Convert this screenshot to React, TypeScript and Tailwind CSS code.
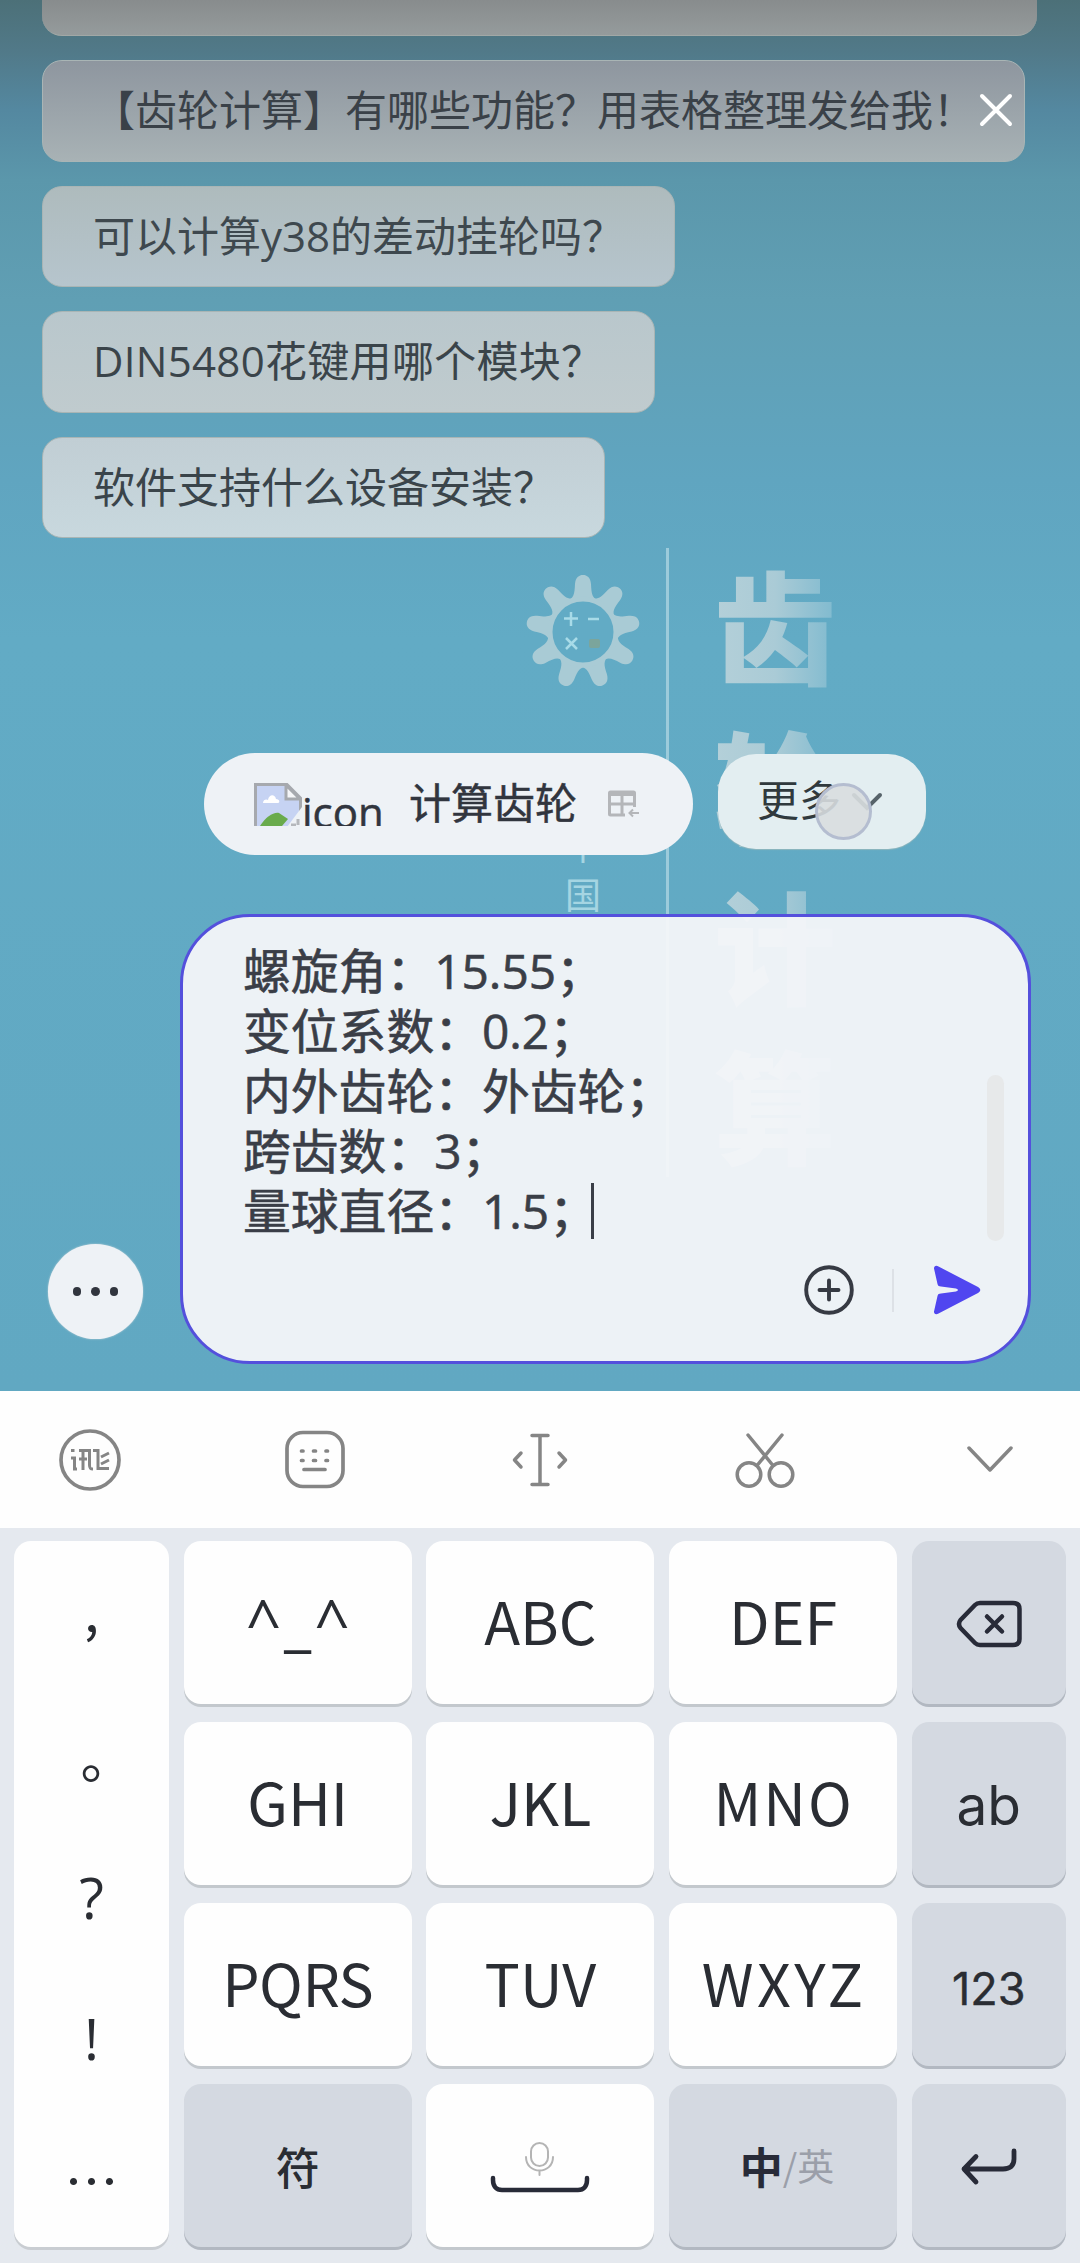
import type { ReactNode } from "react";
import clsx from "clsx";

const latinCjk = "font-['Open_Sans','Noto_Sans_CJK_SC',sans-serif]";
const cjk = "font-['Noto_Sans_CJK_SC',sans-serif]";

const suggestions = [
  {
    text: "【齿轮计算】有哪些功能？用表格整理发给我！",
    box: "w-[983px] bg-linear-to-b from-[#8e969f] to-[#a8b2b5] text-[#3a4148]",
  },
  { text: "可以计算y38的差动挂轮吗？", box: "w-[633px] bg-linear-to-b from-[#aebbbd] to-[#b6c5cd] text-[#3e484e]" },
  {
    text: "DIN5480花键用哪个模块？",
    box: "w-[613px] bg-linear-to-b from-[#b9c7cc] to-[#c0cbce] text-[#3a444a] tracking-[0.3px]",
  },
  { text: "软件支持什么设备安装？", box: "w-[563px] bg-linear-to-b from-[#c1ced4] to-[#c8d8de] text-[#3a444a]" },
];

const message = ["螺旋角：15.55；", "变位系数：0.2；", "内外齿轮：外齿轮；", "跨齿数：3；", "量球直径：1.5；"];

const GearLogo = () => (
  <svg viewBox="-60 -60 120 120" className="absolute left-[523px] top-[572px] size-[120px]">
    <g fill="#a9cbd5">
      {[0, 40, 80, 120, 160, 200, 240, 280, 320].map((a) => (
        <path
          key={a}
          transform={`rotate(${a})`}
          d="M-16 -31C-9 -34 -8.500 -38 -8 -48C-7.500 -54.500 -4 -57 0 -57S7.500 -54.500 8 -48C8.500 -38 9 -34 16 -31Z"
        />
      ))}
    </g>
    <circle r="33" fill="#62abc5" stroke="#a9cbd5" strokeWidth="5" />
    <g stroke="#a8dbe8" strokeWidth="2.500" fill="none">
      <path d="M-19 -13.500H-5M-12 -20V-6M5 -13H16M-17 6L-6 17M-6 6L-17 17" />
    </g>
    <rect x="6" y="7" width="11" height="9" rx="2" fill="#7ba59c" />
  </svg>
);

// Faded artwork behind the chat
const Backdrop = () => (
  <div className={clsx("absolute inset-0", cjk)}>
    <GearLogo />
    <div className="absolute left-[666px] top-[548px] h-[629px] w-[3px] bg-[#9ccbdb]" />
    <div className="absolute left-[714px] top-[542px] w-[122px] bg-linear-to-r from-[#b4d0d9] via-[#aacbd6] to-[#7fbacf] bg-clip-text text-center text-[122px] leading-[160px] font-black text-transparent">
      {["齿", "轮", "计", "算"].map((c) => (
        <div key={c}>{c}</div>
      ))}
    </div>
    <div className="absolute left-[565px] top-[820px] w-[36px] text-center text-[36px] leading-[49px] text-[#a5d5e2]">
      <div>中</div>
      <div>国</div>
    </div>
  </div>
);

const BrokenImage = () => (
  <div className="flex h-[43px] w-[132px] overflow-hidden">
    <svg viewBox="0 0 48 48" className="size-12 shrink-0">
      <path d="M1.500 48V1.500H33L46.500 15V48" fill="#c6d3f3" stroke="#a6a9ae" strokeWidth="3" />
      <path d="M32 2V16H46Z" fill="#f5f6f8" stroke="#a6a9ae" strokeWidth="3" />
      <path d="M9 20C9 16 13 16 14 17C15 11 21 11 22 16C26 16 26 20 24 20Z" fill="#fff" />
      <path d="M6 43C12 34 19 29 25 30L34 36L28 43Z" fill="#69ab4c" />
      <path d="M30 48L48 24V48Z" fill="#eef2f6" />
      <path d="M37 42H42M44 36V42" stroke="#b5b8bc" strokeWidth="3" />
    </svg>
    <span className="text-[42px] leading-[58px] text-[#31353e] [-webkit-text-stroke:0.5px_#31353e]">icon</span>
  </div>
);

const TableIcon = () => (
  <svg viewBox="0 0 32 28" className="h-7 w-8" fill="none" stroke="#b4b6b9" strokeWidth="3">
    <rect x="1.500" y="2" width="25" height="23" rx="1" />
    <path d="M2 4H26" strokeWidth="4" />
    <path d="M2 14H26M14 4V25" />
    <path d="M17 17H32V28H17Z" fill="#eef2f6" stroke="none" />
    <path d="M22 23H31M25 19.500L21.500 23L25 26.500" strokeWidth="2" />
  </svg>
);

const QuickActions = () => (
  <div className={clsx("relative mt-[215px] ml-[204px] flex items-start gap-[25px]", latinCjk)}>
    <div className="flex h-[102px] w-[489px] items-center rounded-full bg-[#eef2f6] pl-[50px]">
      <BrokenImage />
      <span className="mt-[-2px] ml-[23px] w-[168px] text-[42px] leading-[60px] text-[#31353e] [-webkit-text-stroke:0.5px_#31353e]">
        计算齿轮
      </span>
      <span className="ml-[31px]">
        <TableIcon />
      </span>
    </div>
    <div className="relative mt-px flex h-[95px] w-[208px] items-center rounded-[38px] bg-[#e3eef1] pl-[39px] text-[#30393d] shadow-[0_1px_1px_#8fb6be]">
      <span className="mt-[-3px] text-[42px] leading-[60px]">更多</span>
      <svg viewBox="0 0 32 20" className="ml-[10px] h-5 w-8" fill="none" stroke="#57636a" strokeWidth="4" strokeLinecap="round">
        <path d="M3 3L16 16L29 3" />
      </svg>
      <div className="absolute left-[97px] top-[29px] size-[57px] rounded-full border-[3px] border-[#b4bdd0] bg-[#d8dddf]/90" />
    </div>
  </div>
);

const Composer = () => (
  <div className="relative mt-[59px] flex items-end gap-[37px] pl-12">
    <button className="mb-[25px] flex size-[95px] items-center justify-center gap-[10px] rounded-full bg-[#eef2f6] shadow-[0_0_2px_#c4d4da]">
      {[0, 1, 2].map((i) => (
        <i key={i} className="size-[8.5px] rounded-full bg-[#31353e]" />
      ))}
    </button>
    <div className="h-[450px] w-[851px] rounded-[70px] border-[3px] border-[#5450dc] bg-[#f4f6f9]/95 pt-6">
      <div className="flex h-[300px] items-end pr-6 pl-[60px]">
        <div className={clsx("flex-1 text-[47.8px] leading-[60px] text-[#3a3e47] [-webkit-text-stroke:0.6px_#3a3e47]", latinCjk)}>
          {message.map((line, i) => (
            <div key={line} className="flex h-[60px] items-center">
              {line}
              {i === message.length - 1 && <span className="ml-[-6px] h-14 w-[3px] bg-[#3a3e47]" />}
            </div>
          ))}
        </div>
        <div className="h-[166px] w-[17px] rounded-full bg-[#e7e9ea]" />
      </div>
      <div className="mt-6 flex h-[50px] items-center justify-end pr-[47px]">
        <svg viewBox="0 0 50 50" className="size-[50px]" fill="none" stroke="#363a43" strokeWidth="3.900" strokeLinecap="round">
          <circle cx="25" cy="25" r="22.800" />
          <path d="M15.500 25H34.500M25 15.500V34.500" />
        </svg>
        <div className="ml-[38px] h-[43px] w-[2px] bg-[#dde1e6]" />
        <svg viewBox="0 0 48 50" className="ml-[39px] h-[50px] w-12" fill="#5046f0">
          <path d="M1 3.500C1 .5 3.500 .2 5.500 1.500L45 22C48 24 48 26 45 28L5.500 48.500C3 50 .8 49 1 46.500L4.500 31C5 29 6 28.800 8 28.500L23 26.500Q27 25 23 23.500L8 21.500C6 21.200 5 21 4.500 19Z" />
        </svg>
      </div>
    </div>
  </div>
);

const Toolbar = () => (
  <div className="-mx-[22.5px] grid h-[137px] shrink-0 grid-cols-5 place-items-center bg-[#fefefe] text-[#858585]">
    <svg viewBox="0 0 62 62" className="size-[62px]" fill="none" stroke="currentColor" strokeWidth="3.700">
      <circle cx="31" cy="31" r="29" />
      <g strokeWidth="3">
        <path d="M12 21.500H15.500M12 29H15.500V40H18" />
        <path d="M20 21.500H30.500V36C30.500 39 31 40 34 40M24 21.500V41M20 30H28" />
        <path d="M34 21.500H39V39.500H50M42 28L50 24M42 35L50 31" />
      </g>
    </svg>
    <svg viewBox="0 0 60 60" className="size-[60px]" fill="none" stroke="currentColor" strokeWidth="3.700" strokeLinecap="round">
      <rect x="2" y="2.500" width="56" height="54" rx="16" />
      <path d="M16.500 21H18M28.500 21H30.500M41 21H42.500M16.500 30.500H18M28.500 30.500H30.500M41 30.500H42.500M19 39.500H40" />
    </svg>
    <svg viewBox="0 0 56 56" className="size-14" fill="none" stroke="currentColor" strokeWidth="3.500" strokeLinecap="round" strokeLinejoin="round">
      <path d="M20 3.500H36M28 3.500V52.500M20 52.500H36M9 21L2.500 28L9 35M47 21L53.500 28L47 35" />
    </svg>
    <svg viewBox="0 0 60 58" className="h-[58px] w-[60px]" fill="none" stroke="currentColor" strokeWidth="3.500" strokeLinecap="round">
      <path d="M13 4L38 34.500M47 4L22 34.500" />
      <circle cx="14" cy="43.500" r="11.800" />
      <circle cx="46" cy="43.500" r="11.800" />
    </svg>
    <svg viewBox="0 0 48 28" className="h-7 w-12" fill="none" stroke="currentColor" strokeWidth="3.500" strokeLinecap="round" strokeLinejoin="round">
      <path d="M3 2L24 24L45 2" />
    </svg>
  </div>
);

const Key = ({ children, dark, className }: { children: ReactNode; dark?: boolean; className?: string }) => (
  <button
    className={clsx(
      "flex items-center justify-center rounded-[17px]",
      dark ? "bg-[#d4d9e1] shadow-[0_3px_0_#b2b8c1]" : "bg-[#fefefe] shadow-[0_3px_0_#c3c8cd]",
      className ?? "pb-[6px] text-[59px]",
    )}
  >
    {children}
  </button>
);

const Keyboard = () => (
  <div
    className={clsx(
      "grid h-[735px] grid-cols-[155px_228px_228px_228px_154px] grid-rows-[repeat(4,163px)] gap-x-[14.7px] gap-y-[18px] bg-[#e5e9ef] pt-[13px] pl-[14px] leading-none text-[#2a2d33]",
      cjk,
    )}
  >
    <div className="row-span-4 flex flex-col items-center rounded-[17px] bg-[#fefefe] text-[54px] leading-[141px] shadow-[0_3px_0_#c9cdd2]">
      <span className="h-[141px] -translate-y-[3px]">,</span>
      <span className="h-[141px] translate-x-[16px] translate-y-[3px]">。</span>
      <span className="h-[141px] translate-y-1 font-['Open_Sans',sans-serif] text-[57px]">?</span>
      <span className="h-[141px] translate-y-1 font-['Open_Sans',sans-serif] text-[57px]">!</span>
      <span className="h-[141px] translate-y-[3px]">…</span>
    </div>
    <Key className="pb-1 pl-[3px] font-['Open_Sans',sans-serif] text-[62px] tracking-[3px]">^_^</Key>
    <Key>ABC</Key>
    <Key>DEF</Key>
    <Key dark className="pt-[3px]">
      <svg viewBox="0 0 66 48" className="h-12 w-[66px]" fill="none" stroke="#282b38" strokeWidth="4.500" strokeLinecap="round" strokeLinejoin="round">
        <path d="M24 3H57Q63.500 3 63.500 9V39Q63.500 45 57 45H24Q21 45 19 43L4.500 28Q1.500 24 4.500 20L19 5Q21 3 24 3Z" />
        <path d="M31 16.500L46 31.500M46 16.500L31 31.500" />
      </svg>
    </Key>
    <Key>GHI</Key>
    <Key>JKL</Key>
    <Key className="pb-[6px] pl-px text-[59px] tracking-[2px]">MNO</Key>
    <Key dark className="pt-[3px] font-['Inter',sans-serif] text-[55px]">ab</Key>
    <Key className="pb-[6px] text-[59px] tracking-[-0.5px]">PQRS</Key>
    <Key>TUV</Key>
    <Key className="pb-[6px] pl-[2px] text-[59px] tracking-[3.5px]">WXYZ</Key>
    <Key dark className="pt-2 font-['Inter',sans-serif] text-[45px] [-webkit-text-stroke:0.4px_#2a2d33]">123</Key>
    <Key dark className="text-[44px] font-medium">符</Key>
    <Key className="pt-[3px]">
      <svg viewBox="0 0 100 52" className="h-[52px] w-[100px]" fill="none" strokeLinecap="round">
        <g stroke="#b4b4b4" strokeWidth="2">
          <rect x="41" y="2" width="17" height="23" rx="8.500" />
          <path d="M36 16C36 34 63 34 63 16M49.500 30V34" />
        </g>
        <path d="M3 37V39C3 45 6 49 12 49H88C94 49 97 45 97 39V37" stroke="#282b38" strokeWidth="4.500" />
      </svg>
    </Key>
    <Key dark className="pl-2 text-[37px] text-[#9b9fa9]">
      <span className="text-[43px] font-bold text-[#282b38]">中</span>
      <span>/英</span>
    </Key>
    <Key dark className="pt-[3px]">
      <svg viewBox="0 0 58 38" className="h-[38px] w-[58px]" fill="none" stroke="#282b38" strokeWidth="4.800" strokeLinecap="round" strokeLinejoin="round">
        <path d="M54 3V11Q54 21 43 21H4M16 8.500L4 21L16 34" />
      </svg>
    </Key>
  </div>
);

export default function App() {
  return (
    <div lang="zh-CN" className="flex h-[2263px] w-[1080px] flex-col overflow-hidden">
      <main className="relative h-[1391px] overflow-hidden bg-[linear-gradient(180deg,#4c7078_0px,#517988_50px,#5488a0_110px,#5b97ab_180px,#609fb4_300px,#60a5c0_480px,#62abc5_640px,#61a8c2_1391px)]">
        <Backdrop />
        <div className="relative flex flex-col items-start gap-6 pl-[42px]">
          <div className="h-9 w-[995px] rounded-b-[20px] border-b border-[#a2a8a6] bg-linear-to-b from-[#888c8d] to-[#959b9c]" />
          {suggestions.map((s) => (
            <div
              key={s.text}
              className={clsx(
                "flex h-[101.5px] items-center rounded-[20px] border border-[#a9b5b5] pb-px pl-[50px] text-[42px] leading-[60px] whitespace-nowrap",
                latinCjk,
                s.box,
              )}
            >
              {s.text}
            </div>
          ))}
          <svg viewBox="0 0 34 34" className="absolute left-[979px] top-[93px] size-[34px]" stroke="#fff" strokeWidth="4" strokeLinecap="round">
            <path d="M3 3L31 31M31 3L3 31" />
          </svg>
        </div>
        <QuickActions />
        <Composer />
      </main>
      <Toolbar />
      <Keyboard />
    </div>
  );
}
